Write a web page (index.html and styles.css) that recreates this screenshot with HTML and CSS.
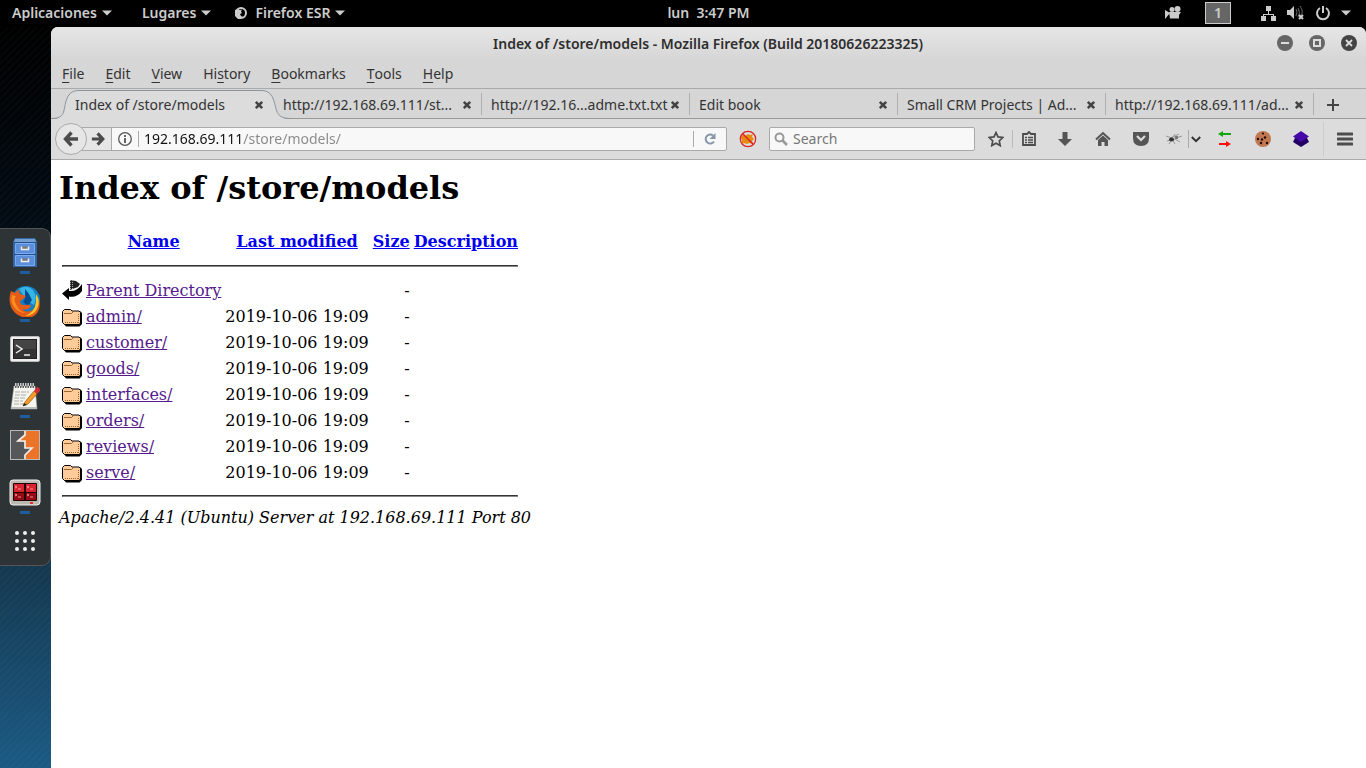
FILE: index.html
```html
<!DOCTYPE html>
<html lang="en">
<head>
<meta charset="utf-8">
<title>Index of /store/models</title>
<link rel="stylesheet" href="styles.css">
</head>
<body>
<svg class="defs" aria-hidden="true">
  <symbol id="folder" viewBox="0 0 20 22">
    <path d="M2 19l2 2.500h13.500L20 19V8l-2-2v12z" fill="#000"/>
    <path d="M.5 17.500V6.500L2.500 4.500h6l1.500 1.500h7l1.500 1.500v10.500l-1.500 1.500H2.500z" fill="#fc9" stroke="#000"/>
    <path d="M2 8.500h7.500L11 7" fill="none" stroke="#996633"/>
    <path d="M16.500 9v9M3 17.500h14" fill="none" stroke="#996633" stroke-dasharray="1 1"/>
  </symbol>
  <symbol id="close" viewBox="0 0 10 10">
    <path d="M1.800 1.800l6.400 6.400M8.200 1.800L1.800 8.200" stroke="#444" stroke-width="2.600"/>
  </symbol>
  <symbol id="caret" viewBox="0 0 10 6"><path d="M0 .5h10L5 5.500z" fill="#ccc"/></symbol>
</svg>

<header class="topbar">
  <nav class="topbar-menus">
    <button class="top-btn">Aplicaciones<svg class="caret"><use href="#caret"/></svg></button>
    <button class="top-btn">Lugares<svg class="caret"><use href="#caret"/></svg></button>
    <button class="top-btn"><svg class="app-mark" viewBox="0 0 12 12"><circle cx="6" cy="6" r="5" fill="none" stroke="#ccc" stroke-width="2"/><path d="M0 3l3-1 2 1 2-.5-1 2 1 1.500-2 1 1 2 2 1-3 2H3L0 9z" fill="#ccc"/></svg>Firefox ESR<svg class="caret"><use href="#caret"/></svg></button>
  </nav>
  <button class="top-btn clock">lun&nbsp; 3:47 PM</button>
  <div class="topbar-status">
    <button class="status-btn" aria-label="Screen recorder"><svg width="16" height="14" viewBox="0 0 16 14" fill="#ccc"><path d="M0 4l5 3-5 6z"/><circle cx="7" cy="3.500" r="2.500"/><circle cx="12.500" cy="3" r="3"/><path d="M4 6h12l-2 3v3.500H5z"/></svg></button>
    <button class="workspace">1</button>
    <button class="status-btn tray" aria-label="System menu">
      <svg width="16" height="16" viewBox="0 0 16 16" fill="#ccc"><path d="M5 1h5v5H5zM0 11h5v5H0zM10 11h5v5h-5zM7 6h1v3h5v2h-1v-1H3v1H2V9h5z"/></svg>
      <svg width="18" height="16" viewBox="0 0 18 16"><path d="M0 5h3l4-4v13L3 10H0z" fill="#ccc"/><path d="M9 4q2 3 0 7M11 3q3 5 0 9M13 1q4 6 1 9" fill="none" stroke="#666"/><path d="M12 10l4 4M16 10l-4 4" stroke="#ccc" stroke-width="2"/></svg>
      <svg width="16" height="16" viewBox="0 0 16 16" fill="none" stroke="#ccc" stroke-width="2"><path d="M5 3a6 6 0 1 0 6 0M8 1v7"/></svg>
      <svg class="caret"><use href="#caret"/></svg>
    </button>
  </div>
</header>

<div class="desktop">
  <aside class="dock-area">
    <nav class="dock">
      <button class="dock-item running" aria-label="Files"><svg viewBox="0 0 32 32"><path d="M6 1h20l2 4v25H4V5z" fill="#3465a4"/><path d="M6 2h20l1 3H5z" fill="#729fcf"/><path d="M6.500 6.500h19v10h-19zM6.500 18.500h19v10h-19z" fill="#5b8fdc" stroke="#7aabef"/><path d="M5 5.500h22M5 17.500h22" stroke="#234f94"/><path d="M12.500 9.500v3h7v-3M12.500 21.500v3h7v-3" fill="#777" stroke="#eee" stroke-width="1.500"/></svg></button>
      <button class="dock-item running" aria-label="Firefox"><svg viewBox="0 0 32 32"><circle cx="17" cy="15" r="14" fill="#147fc2"/><path d="M10 4q8-5 14 1 5 7 1 15l-8-5-5-8z" fill="#35b5e4"/><path d="M16 4l4 5 3 6-4 6-5-4 2-4z" fill="#074c91"/><path d="M2 6q2 1 4 2 2-3 5-3l-1 3 3 2q3 0 4 1l-3 3-3 2q0 5 6 4 4-1 5 1-3 5-9 3 5 5 12 0 4-4 3-12 4 5 2 12-3 9-13 9Q6 31 2 22-1 14 2 6z" fill="#e65b16"/><path d="M27 9q5 7 1 15-4 7-12 7 10-4 11-14z" fill="#ffc529"/><path d="M3 10q-2 8 3 13 4 5 11 5-8-2-10-9-3-5 0-8z" fill="#f88d20"/></svg></button>
      <button class="dock-item" aria-label="Terminal"><svg viewBox="0 0 32 32"><rect x="1.500" y="3.500" width="29" height="25" rx="1.500" fill="#eee" stroke="#bbb"/><path d="M4 6h24v20H4z" fill="#222"/><path d="M5 7h22v9H5z" fill="#444"/><path d="M5 16h22v9H5z" fill="#333"/><path d="M7 12l6 4-6 4M15 22h6" fill="none" stroke="#eee" stroke-width="1.500"/></svg></button>
      <button class="dock-item running" aria-label="Text editor"><svg viewBox="0 0 32 32"><path d="M5 5h21l2 23H2z" fill="#f5f5ef" stroke="#aaa" stroke-width=".5"/><path d="M2 26h26v2H2z" fill="#bbb"/><path d="M6 4h19" stroke="#ccc" stroke-width="4" stroke-dasharray="1.500 1"/><path d="M6 6h19" stroke="#333" stroke-width="1.500" stroke-dasharray="1.500 1"/><path d="M6 11h14M6 14h12M5 17h12M5 20h9M5 23h11" stroke="#aaa" stroke-dasharray="5 1"/><path d="M16 21l9-11 3 3-9 10-5 2z" fill="#f49a26" stroke="#915616" stroke-width=".7"/><path d="M25 10l3-4q3 0 3 4l-3 3z" fill="#d52c37"/><path d="M14 25l1-3 3 2z" fill="#222"/></svg></button>
      <button class="dock-item" aria-label="Burp Suite"><svg viewBox="0 0 32 32"><path d="M1 1h30v30H1z" fill="#555759"/><path d="M16 1h15v30H16v-5l8-7h-8v-6H8l8-7z" fill="#eb7429"/><path d="M16 1v5l-7 6h7v7h7l-7 7v5" fill="none" stroke="#eee" stroke-width="1.700"/><rect x="1.500" y="1.500" width="29" height="29" fill="none" stroke="#b9b9b9"/></svg></button>
      <button class="dock-item running" aria-label="Terminator"><svg viewBox="0 0 32 32"><rect x="1" y="3" width="30" height="25" rx="3" fill="#babab3" stroke="#eee"/><rect x="4" y="6" width="24" height="18" rx="1" fill="#260000"/><path d="M5 7h10v8H5zM17 7h10v8H17z" fill="#d72430"/><path d="M5 16h10v7H5zM17 16h10v7H17z" fill="#960b13"/><path d="M6 9l2 1-2 1M9 12h3M18 9l2 1-2 1M21 12h3M6 17l2 1-2 1M9 20h3M18 17l2 1-2 1M21 20h3" fill="none" stroke="#ffb3b3" stroke-width=".8"/><path d="M21 26h3" stroke="#e00" stroke-width="1.500"/></svg></button>
      <button class="dock-item" aria-label="Show applications"><svg viewBox="0 0 32 32" fill="#eee"><circle cx="8" cy="8" r="2"/><circle cx="16" cy="8" r="2"/><circle cx="24" cy="8" r="2"/><circle cx="8" cy="16" r="2"/><circle cx="16" cy="16" r="2"/><circle cx="24" cy="16" r="2"/><circle cx="8" cy="24" r="2"/><circle cx="16" cy="24" r="2"/><circle cx="24" cy="24" r="2"/></svg></button>
    </nav>
  </aside>

  <section class="window">
    <div class="titlebar">
      <span class="window-title">Index of /store/models - Mozilla Firefox (Build 20180626223325)</span>
      <div class="window-controls">
        <button aria-label="Minimize"><svg viewBox="0 0 16 16"><circle cx="8" cy="8" r="8" fill="#666"/><path d="M4 8h8" stroke="#ddd" stroke-width="2"/></svg></button>
        <button aria-label="Maximize"><svg viewBox="0 0 16 16"><circle cx="8" cy="8" r="8" fill="#666"/><path d="M5 5h6v6H5z" fill="none" stroke="#ddd" stroke-width="2"/></svg></button>
        <button aria-label="Close"><svg viewBox="0 0 16 16"><circle cx="8" cy="8" r="8" fill="#444"/><path d="M5 5l6 6M11 5l-6 6" stroke="#ddd" stroke-width="1.800"/></svg></button>
      </div>
    </div>
    <nav class="menubar">
      <button><u>F</u>ile</button><button><u>E</u>dit</button><button><u>V</u>iew</button><button>Hi<u>s</u>tory</button><button><u>B</u>ookmarks</button><button><u>T</u>ools</button><button><u>H</u>elp</button>
    </nav>
    <div class="tabs">
      <div class="tab active">
        <svg class="tab-shape" viewBox="0 0 240 31"><path d="M0 30C15 30 13 22 16 12Q19 1 27 1H211Q219 1 222 12C226 24 225 30 240 30V31H0z" fill="#dcdcdc"/><path d="M0 29.500C15 29.500 12 22 15 12Q18 1.500 27 1.500H211Q220 1.500 223 12C226 22 225 29.500 240 29.500" fill="none" stroke="#8e959c"/></svg>
        <button class="tab-label">Index of /store/models</button><button class="tab-close" aria-label="Close tab"><svg><use href="#close"/></svg></button>
      </div>
      <div class="tab"><button class="tab-label">http://192.168.69.111/st...</button><button class="tab-close" aria-label="Close tab"><svg><use href="#close"/></svg></button></div>
      <div class="tab"><button class="tab-label">http://192.16...adme.txt.txt</button><button class="tab-close" aria-label="Close tab"><svg><use href="#close"/></svg></button></div>
      <div class="tab"><button class="tab-label">Edit book</button><button class="tab-close" aria-label="Close tab"><svg><use href="#close"/></svg></button></div>
      <div class="tab"><button class="tab-label">Small CRM Projects | Ad...</button><button class="tab-close" aria-label="Close tab"><svg><use href="#close"/></svg></button></div>
      <div class="tab"><button class="tab-label">http://192.168.69.111/ad...</button><button class="tab-close" aria-label="Close tab"><svg><use href="#close"/></svg></button></div>
      <button class="new-tab" aria-label="New tab"><svg width="12" height="12" viewBox="0 0 12 12"><path d="M0 6h12M6 0v12" stroke="#444" stroke-width="2"/></svg></button>
    </div>
    <div class="toolbar">
      <button class="back" aria-label="Back"><svg width="16" height="16" viewBox="0 0 16 16" fill="none" stroke="#4c4c4c" stroke-width="3.400"><path d="M8.500 1.500L2.500 8l6 6.500M3 8h12"/></svg></button>
      <div class="urlbar">
        <button class="forward" aria-label="Forward"><svg width="14" height="14" viewBox="0 0 16 16" fill="none" stroke="#4c4c4c" stroke-width="3.600"><path d="M7.500 1.500l6 6.500-6 6.500M13 8H1"/></svg></button>
        <button class="identity" aria-label="Site information"><svg width="14" height="14" viewBox="0 0 14 14"><circle cx="7" cy="7" r="6.300" fill="none" stroke="#555" stroke-width="1.300"/><path d="M7 6v5M7 3v2" stroke="#555" stroke-width="1.800"/></svg></button>
        <input class="url" type="text" aria-label="Address" value="192.168.69.111/store/models/">
        <button class="reload" aria-label="Reload"><svg width="12" height="12" viewBox="0 0 12 12"><path d="M9 2.500A4.500 4.500 0 1 0 10 8.500" fill="none" stroke="#8796a8" stroke-width="2"/><path d="M11.500 0v6H5.500z" fill="#8796a8"/></svg></button>
      </div>
      <button class="noscript" aria-label="Script blocker"><svg width="18" height="18" viewBox="0 0 18 18"><path d="M3 5l3 1 3-2 2 1 3-1-1 3 2 2-2 2 1 3-4-1-2 1-3-1-2 1v-4l-1-2z" fill="#e68a10"/><circle cx="9" cy="9" r="7.700" fill="none" stroke="#d22" stroke-width="1.300"/><path d="M3.500 3.500l11 11" stroke="#d22" stroke-width="1.500"/></svg></button>
      <label class="search"><svg width="14" height="14" viewBox="0 0 14 14" fill="none" stroke="#999"><circle cx="5.500" cy="5.500" r="4" stroke-width="2"/><path d="M8.500 8.500l4.500 4.500" stroke-width="2.600"/></svg><input type="text" placeholder="Search" aria-label="Search"></label>
      <button class="tool star" aria-label="Bookmark"><svg width="16" height="16" viewBox="0 0 16 16"><path d="M8 1.500l2 4.400 4.800.6-3.500 3.300.9 4.800L8 12.200l-4.200 2.400.9-4.800L1.200 6.500 6 5.900z" fill="none" stroke="#4c4c4c" stroke-width="1.700"/></svg></button>
      <button class="tool list" aria-label="Bookmarks list"><svg width="14" height="16" viewBox="0 0 14 16"><path d="M5 3l2-2 2 2h4v11H1V3z" fill="none" stroke="#4c4c4c" stroke-width="1.800"/><path d="M3 6.500h2M6 6.500h5M3 9h2M6 9h5M3 11.500h2M6 11.500h5" stroke="#4c4c4c" stroke-width="1.500"/></svg></button>
      <button class="tool" aria-label="Downloads"><svg width="14" height="14" viewBox="0 0 14 14"><path d="M4.500 0h5v7H14l-7 7-7-7h4.500z" fill="#555"/></svg></button>
      <button class="tool" aria-label="Home"><svg width="16" height="16" viewBox="0 0 16 16"><path d="M1 8.500L8 2l7 6.500" fill="none" stroke="#555" stroke-width="2"/><path d="M3 9l5-4.500L13 9v6H9.500v-4h-3v4H3z" fill="#555"/></svg></button>
      <button class="tool" aria-label="Pocket"><svg width="16" height="14" viewBox="0 0 16 14"><path d="M0 0h16v6q0 8-8 8T0 6z" fill="#555"/><path d="M4 4l4 4 4-4" fill="none" stroke="#ddd" stroke-width="2.200"/></svg></button>
      <button class="tool fly" aria-label="Fly"><svg width="16" height="12" viewBox="0 0 16 12"><path d="M0 3l6 2 3-4M5 5l8-4M10 5l6-2M9 6l5 3M3 11l3-5 3 5M1 8l8-2" fill="none" stroke="#999"/><ellipse cx="5.500" cy="6.500" rx="2.500" ry="2" fill="#333"/><circle cx="10.500" cy="4.500" r="1.800" fill="#777"/></svg></button>
      <button class="tool chevron" aria-label="More options"><svg width="10" height="7" viewBox="0 0 10 7"><path d="M.8 1L5 5.200 9.200 1" fill="none" stroke="#333" stroke-width="2"/></svg></button>
      <button class="tool" aria-label="Proxy"><svg width="14" height="16" viewBox="0 0 14 16"><path d="M0 3l5-3v2h8v2H5v2z" fill="#12a712"/><path d="M13 13l-5-3v2H1v2h7v2z" fill="#fa1111"/></svg></button>
      <button class="tool" aria-label="Cookies"><svg width="16" height="16" viewBox="0 0 16 16"><circle cx="8" cy="8" r="8" fill="#c07850"/><g fill="#210a00"><circle cx="8" cy="2.500" r="1.100"/><circle cx="10" cy="6.500" r="1.200"/><circle cx="3" cy="8" r="1.200"/><circle cx="7" cy="8.500" r="1.200"/><circle cx="6" cy="12" r="1.200"/><circle cx="12" cy="12" r="1.200"/></g></svg></button>
      <button class="tool" aria-label="Layers"><svg width="16" height="16" viewBox="0 0 16 16"><path d="M2 7l-2 4 8 5 8-5-2-4z" fill="#220063"/><path d="M8 0l8 5.500-8 5.500-8-5.500z" fill="#4608a9"/></svg></button>
      <button class="tool app-menu" aria-label="Open menu"><svg width="16" height="14" viewBox="0 0 16 14"><path d="M1 2h14M1 7h14M1 12h14" stroke="#4c4c4c" stroke-width="3" stroke-linecap="round"/></svg></button>
    </div>

    <main class="page">
      <h1>Index of /store/models</h1>
      <table>
        <thead>
          <tr><th class="icon-cell"></th><th><a href="#">Name</a></th><th><a href="#">Last modified</a></th><th><a href="#">Size</a></th><th><a href="#">Description</a></th></tr>
          <tr><th colspan="5"><hr></th></tr>
        </thead>
        <tbody>
          <tr><td class="icon-cell"><svg class="file-icon" viewBox="0 0 20 22"><path d="M0 14.500L7 9v3q8 1 13-7v7q-5 7-13 5.500V21z" fill="#000"/><path d="M8 1l6 1 4 3-2 3-8 3z" fill="#222"/><path d="M8.500 1v9M10.500 1v9" stroke="#aaa" stroke-dasharray="1 1"/></svg></td><td><a class="visited" href="#">Parent Directory</a></td><td></td><td class="right">-</td><td></td></tr>
          <tr><td class="icon-cell"><svg class="file-icon"><use href="#folder"/></svg></td><td><a class="visited" href="#">admin/</a></td><td class="right">2019-10-06 19:09</td><td class="right">-</td><td></td></tr>
          <tr><td class="icon-cell"><svg class="file-icon"><use href="#folder"/></svg></td><td><a class="visited" href="#">customer/</a></td><td class="right">2019-10-06 19:09</td><td class="right">-</td><td></td></tr>
          <tr><td class="icon-cell"><svg class="file-icon"><use href="#folder"/></svg></td><td><a class="visited" href="#">goods/</a></td><td class="right">2019-10-06 19:09</td><td class="right">-</td><td></td></tr>
          <tr><td class="icon-cell"><svg class="file-icon"><use href="#folder"/></svg></td><td><a class="visited" href="#">interfaces/</a></td><td class="right">2019-10-06 19:09</td><td class="right">-</td><td></td></tr>
          <tr><td class="icon-cell"><svg class="file-icon"><use href="#folder"/></svg></td><td><a class="visited" href="#">orders/</a></td><td class="right">2019-10-06 19:09</td><td class="right">-</td><td></td></tr>
          <tr><td class="icon-cell"><svg class="file-icon"><use href="#folder"/></svg></td><td><a class="visited" href="#">reviews/</a></td><td class="right">2019-10-06 19:09</td><td class="right">-</td><td></td></tr>
          <tr><td class="icon-cell"><svg class="file-icon"><use href="#folder"/></svg></td><td><a class="visited" href="#">serve/</a></td><td class="right">2019-10-06 19:09</td><td class="right">-</td><td></td></tr>
          <tr><th colspan="5"><hr></th></tr>
        </tbody>
      </table>
      <address>Apache/2.4.41 (Ubuntu) Server at 192.168.69.111 Port 80</address>
    </main>
  </section>
</div>
</body>
</html>
```
FILE: styles.css
```css
* { box-sizing: border-box; }
body {
  margin: 0;
  min-height: 100vh;
  display: flex;
  flex-direction: column;
  background: #000;
  font-family: "Noto Sans", "Open Sans", sans-serif;
  font-size: 14px;
  color: #333;
}
button {
  font: inherit;
  color: inherit;
  background: none;
  border: 0;
  padding: 0;
  display: flex;
  align-items: center;
  justify-content: center;
}
input { font: inherit; border: 0; background: none; padding: 0; outline: 0; min-width: 0; }
svg { display: block; flex: none; }
.defs { position: absolute; width: 0; height: 0; }

/* Desktop panel */
.topbar {
  height: 27px;
  display: grid;
  grid-template-columns: 1fr auto 1fr;
  align-items: center;
  padding: 0 15px 2px 12px;
  background: #000;
  color: #ccc;
  font-weight: 600;
}
.topbar-menus { display: flex; gap: 30px; }
.top-btn { gap: 5px; }
.caret { width: 10px; height: 6px; }
.app-mark { width: 12px; height: 12px; margin: 0 3px 0 -6px; }
.clock { padding-left: 54px; }
.topbar-status { display: flex; justify-content: flex-end; align-items: center; }
.workspace {
  width: 26px;
  height: 22px;
  margin: 0 30px 0 24px;
  background: #666;
  border: 1px solid #ccc;
}
.tray { gap: 10px; }

.desktop {
  flex: 1;
  display: flex;
  background: repeating-linear-gradient(135deg, #ffffff05 0 2px, transparent 2px 5px), linear-gradient(#000 0, #020a12 180px, #14384f 540px, #1b5a84 100%);
}
.dock-area { width: 51px; flex: none; display: flex; align-items: center; padding-bottom: 2px; }
.dock {
  width: 51px;
  background: #2e3436;
  border: 1px solid #555;
  border-left: 0;
  border-radius: 0 9px 9px 0;
}
.dock-item { position: relative; width: 50px; height: 48px; }
.dock-item svg { width: 32px; height: 32px; }
.running::after {
  content: "";
  position: absolute;
  left: 20px;
  bottom: 3px;
  width: 10px;
  height: 3px;
  background: #215d9c;
}

/* Browser window */
.window {
  flex: 1;
  min-width: 0;
  display: flex;
  flex-direction: column;
  background: #fff;
  border-radius: 7px 7px 0 0;
  overflow: hidden;
}
.titlebar {
  height: 32px;
  display: grid;
  grid-template-columns: 1fr auto 1fr;
  align-items: center;
  padding-right: 9px;
  background: linear-gradient(#e6e6e6, #d6d6d6);
}
.window-title { grid-column: 2; padding-left: 8px; font-weight: 600; color: #2e2e2e; }
.window-controls { display: flex; justify-content: flex-end; gap: 16px; }
.window-controls svg { width: 16px; height: 16px; }
.menubar {
  height: 30px;
  display: flex;
  align-items: center;
  gap: 21px;
  padding-left: 11px;
  background: #d6d6d6;
  border-bottom: 1px solid #aaa;
}
.menubar u { text-underline-offset: 3px; }
.tabs {
  height: 30px;
  display: flex;
  align-items: center;
  padding-left: 15px;
  background: #d6d6d6;
  border-bottom: 1px solid #999;
}
.tab {
  position: relative;
  flex: 0 1 208px;
  min-width: 0;
  height: 22px;
  display: flex;
  align-items: center;
  padding: 2px 6px 0 9px;
  border-right: 1px solid #b0b0b0;
}
.tab.active { border-color: transparent; }
.tab-label { flex: 1; min-width: 0; justify-content: flex-start; white-space: nowrap; position: relative; }
.tab-close { width: 16px; height: 16px; position: relative; }
.tab-close svg { width: 10px; height: 10px; }
.tab-shape { position: absolute; left: -15px; top: -4px; width: 240px; height: 31px; }
.new-tab { width: 38px; height: 22px; padding-top: 2px; }
.toolbar {
  height: 41px;
  display: flex;
  align-items: center;
  padding-left: 4px;
  background: #dcdcdc;
  border-bottom: 1px solid #aaa;
}
.back {
  position: relative;
  z-index: 1;
  width: 32px;
  height: 32px;
  background: #e6e6e6;
  border: 1px solid #aaa;
  border-radius: 50%;
}
.urlbar {
  flex: 1;
  min-width: 0;
  height: 24px;
  display: flex;
  align-items: center;
  margin-left: -9px;
  background: #f8f8f8;
  border: 1px solid #aaa;
  border-radius: 2px;
}
.forward { width: 33px; height: 22px; padding-left: 6px; background: #e6e6e6; border-right: 1px solid #aaa; }
.identity { width: 27px; height: 16px; border-right: 1px solid #aaa; }
.url {
  flex: 1;
  margin-left: 5px;
  padding-bottom: 2px;
  color: #111;
  -webkit-text-fill-color: transparent;
  background: linear-gradient(90deg, #111 99px, #888 99px);
  -webkit-background-clip: text;
  background-clip: text;
}
.reload { width: 33px; height: 16px; border-left: 1px solid #aaa; }
.noscript { width: 42px; height: 24px; }
.search {
  flex: 0 1 206px;
  min-width: 0;
  height: 24px;
  display: flex;
  align-items: center;
  gap: 5px;
  padding: 0 4px;
  background: #f8f8f8;
  border: 1px solid #aaa;
  border-radius: 2px;
}
.search input { flex: 1; width: 0; padding-bottom: 2px; }
.search input::placeholder { color: #777; opacity: 1; }
.tool { width: 38px; height: 18px; flex: none; }
.star { width: 33px; margin-left: 5px; border-right: 1px solid #bbb; }
.list { width: 32px; margin-right: 1px; }
.fly { width: 29px; border-right: 1px solid #aaa; }
.chevron { width: 14px; margin-right: 3px; }
.app-menu { width: 43px; height: 34px; margin-left: 3px; border-left: 1px solid #ccc; }

/* Directory listing */
.page {
  padding: 9px 8px;
  font-family: "DejaVu Serif", serif;
  font-size: 16px;
  color: #000;
}
.page h1 { margin: 0 0 21px; font-size: 32px; }
.page table { border-spacing: 2px; }
.page th, .page td { padding: 1px; line-height: 22px; }
.page td { height: 24px; padding: 2px 1px 0; vertical-align: top; }
.page .icon-cell { width: 22px; height: 24px; padding: 1px; }
.file-icon { width: 20px; height: 22px; }
.page hr { margin: 8px 0; border: 1px inset #888; }
.page a { color: #00e; }
.page .visited { color: #551a8b; }
.right { text-align: right; }
```
